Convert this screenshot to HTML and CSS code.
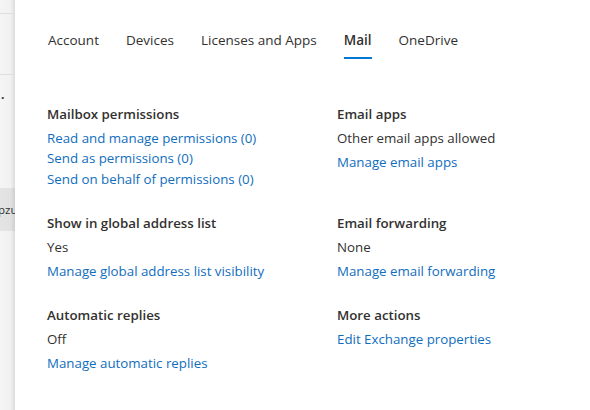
FILE: index.html
```html
<!DOCTYPE html>
<html lang="en">
<head>
  <meta charset="UTF-8">
  <meta name="viewport" content="width=device-width, initial-scale=1.0">
  <title>User details - Mail</title>
  <link rel="stylesheet" href="styles.css">
</head>
<body>
  <div class="page">
    <!-- pagina por tras do painel -->
    <div class="backdrop">
      <div class="backdrop-row"></div>
      <div class="backdrop-row"></div>
      <div class="backdrop-dot">.</div>
      <div class="backdrop-selected">pzu</div>
    </div>

    <div class="panel">
      <nav class="tabs">
        <span class="tab">Account</span>
        <span class="tab">Devices</span>
        <span class="tab">Licenses and Apps</span>
        <span class="tab active">Mail</span>
        <span class="tab">OneDrive</span>
      </nav>

      <div class="sections">
        <div class="section">
          <h3>Mailbox permissions</h3>
          <a href="#" class="link tight">Read and manage permissions (0)</a>
          <a href="#" class="link tight">Send as permissions (0)</a>
          <a href="#" class="link tight">Send on behalf of permissions (0)</a>
        </div>
        <div class="section">
          <h3>Email apps</h3>
          <p>Other email apps allowed</p>
          <a href="#" class="link">Manage email apps</a>
        </div>

        <div class="section">
          <h3>Show in global address list</h3>
          <p>Yes</p>
          <a href="#" class="link">Manage global address list visibility</a>
        </div>
        <div class="section">
          <h3>Email forwarding</h3>
          <p>None</p>
          <a href="#" class="link">Manage email forwarding</a>
        </div>

        <div class="section">
          <h3>Automatic replies</h3>
          <p>Off</p>
          <a href="#" class="link">Manage automatic replies</a>
        </div>
        <div class="section">
          <h3>More actions</h3>
          <a href="#" class="link">Edit Exchange properties</a>
        </div>
      </div>
    </div>
  </div>
</body>
</html>
```

FILE: styles.css
```css
body {
  margin: 0;
  padding: 0;
  font-family: 'Segoe UI', 'Open Sans', sans-serif;
  font-size: 13.3px;
  color: #323130;
  background-color: #ffffff;
}
.page {
  display: flex;
  height: 410px;
  overflow: hidden;
}

/* pagina atras */
.backdrop {
  width: 15px;
  flex-shrink: 0;
  background: linear-gradient(to right, #f5f5f5 0%, #f1f1f1 70%, #dcdcdc 100%);
  overflow: hidden;
  font-size: 12px;
  color: #323130;
}
.backdrop-row {
  height: 60px;
  border-bottom: 1px solid #dedede;
}
.backdrop-row:first-child {
  height: 13px;
}
.backdrop-dot {
  height: 20px;
  line-height: 20px;
  margin-top: 10px;
  padding-left: 1px;
  font-weight: bold;
}
.backdrop-selected {
  margin-top: 83px;
  height: 43px;
  line-height: 43px;
  font-size: 11.5px;
  white-space: nowrap;
  text-indent: -2px;
  background: linear-gradient(to right, #e4e4e4 0%, #e1e1e1 70%, #cfcfcf 100%);
}

.panel {
  flex: 1;
  padding: 30px 0 0 33px;
}

/* abas */
.tabs {
  display: flex;
  gap: 27px;
  font-size: 13.5px;
}
.tab {
  position: relative;
  line-height: 20px;
  padding-bottom: 9px;
  cursor: pointer;
}
.tab.active {
  font-weight: 600;
}
.tab.active::after {
  content: '';
  position: absolute;
  left: 0;
  right: 0;
  bottom: 0;
  height: 2px;
  background-color: #0078d4;
}

/* secoes */
.sections {
  display: grid;
  grid-template-columns: 290px 1fr;
  row-gap: 24px;
  margin-top: 44.5px;
  margin-left: -1px;
}
.section {
  display: flex;
  flex-direction: column;
  align-items: flex-start;
}
h3 {
  margin: 0 0 4px;
  font-size: 13.3px;
  font-weight: 600;
  line-height: 20px;
}
p {
  margin: 0 0 4px;
  line-height: 20px;
}
.link {
  color: #106ebe;
  text-decoration: none;
  line-height: 20px;
}
.link.tight {
  line-height: 20.5px;
}
```
